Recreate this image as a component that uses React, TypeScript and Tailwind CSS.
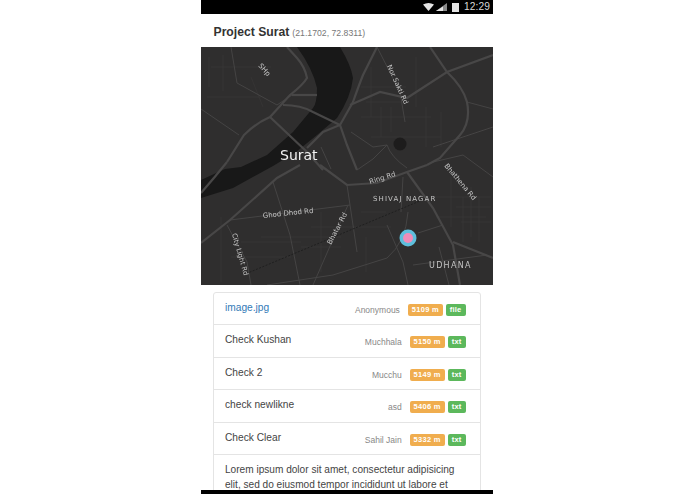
const rows = [
  { name: "image.jpg", author: "Anonymous", dist: "5109 m", kind: "file", link: true },
  { name: "Check Kushan", author: "Muchhala", dist: "5150 m", kind: "txt" },
  { name: "Check 2", author: "Mucchu", dist: "5149 m", kind: "txt" },
  { name: "check newlikne", author: "asd", dist: "5406 m", kind: "txt" },
  { name: "Check Clear", author: "Sahil Jain", dist: "5332 m", kind: "txt" },
];

const majorRoads = [
  "M26 115 L43 88 Q55 76 69 70 L89 48 Q102 38 106 31 Q104 20 96 11 L86 0",
  "M0 146 Q14 130 26 115",
  "M69 70 L106 105 L122 123",
  "M82 58 Q100 58 112 65 L139 78 L146 98 L156 123",
  "M91 48 L116 48",
  "M106 101 L122 85 L139 78 L152 55 Q158 38 162 28 L176 0",
  "M229 0 L246 25 Q262 40 266 55 Q270 75 259 88 L239 111 L226 118",
  "M119 118 L146 138 L176 136 L206 125 L226 118",
  "M206 125 L232 161 L252 198 L259 238",
  "M0 196 L29 173 L76 131 L99 118",
  "M149 58 L179 45 L206 51 L246 25 L292 8",
  "M252 195 L292 211",
];

const minorRoads = [
  "M176 0 L199 45 L204 75",
  "M29 173 L149 158 L146 138",
  "M72 135 L89 188 L99 238",
  "M149 158 L156 205",
  "M112 238 L147 158",
  "M66 238 L132 228 L186 211 Q205 195 207 165",
  "M186 178 L202 215 L207 238",
  "M217 186 L242 178",
  "M212 218 L286 208",
  "M26 178 L46 215 L50 238",
  "M186 98 Q190 110 206 121 M186 98 L172 112 L156 123",
  "M232 115 L262 108 L292 130",
  "M0 62 L38 88 M30 0 L36 36 L76 58 L91 48",
  "M232 100 L292 80 M266 55 L292 62",
  "M202 130 L200 165 M238 200 L248 238",
  "M150 85 L172 100 L186 98 M120 100 L130 122",
];

const streets =
  "M10 20 H70 M6 50 H60 M160 70 H230 M170 90 H240 M60 190 H140 M110 180 H190 M230 150 H290 M235 170 H285 " +
  "M170 20 V70 M215 10 V60 M20 170 V235 M120 165 V225 M250 130 V180 M270 140 V190 " +
  "M8 10 V40 M22 8 V44 M50 30 L62 60 M160 40 H205 M165 55 H200 M180 60 V90 M190 60 V85 M225 60 V100 M240 65 V100 " +
  "M40 195 H100 M30 210 H90 M100 200 H140 M160 165 H185 M165 190 V225 M255 160 H290 M260 175 H290 M262 150 V195 M278 150 V195";

const Map = () => (
  <svg viewBox="0 0 292 238" className="block w-full h-[238px] bg-[#2f2e2e] blur-[0.3px]">
    <path
      d="M96 0 Q112 22 116 41 Q116 56 112 61 L92 85 L66 108 L40 120 L24 122 L0 133 L0 151 L32 141 L72 119 L95 105 L116 88 L136 71 Q150 50 152 31 Q150 18 139 0 Z"
      fill="#181818"
    />
    <path d={streets} fill="none" stroke="#3a3939" strokeWidth="0.6" />
    <g fill="none" stroke="#454444" strokeWidth="1">
      {minorRoads.map((d) => (
        <path key={d} d={d} />
      ))}
    </g>
    <g fill="none" stroke="#484747" strokeWidth="2.2">
      {majorRoads.map((d) => (
        <path key={d} d={d} />
      ))}
    </g>
    <path d="M42 228 L226 151" fill="none" stroke="#1f1f1f" strokeWidth="1" strokeDasharray="2 1.5" />
    <circle cx="199" cy="97" r="6.5" fill="#1d1c1c" />
    <circle cx="207" cy="191" r="8.5" fill="#5ebfdd" />
    <circle cx="207" cy="191" r="5" fill="#f08cb8" />
    <g fill="#c4c4c4" fontSize="7" fontFamily="'DejaVu Sans', sans-serif">
      <text x="79" y="113" fill="#f2f2f2" fontSize="14">Surat</text>
      <text transform="translate(57 19) rotate(48)">SHp</text>
      <text transform="translate(186 19) rotate(66)" fontSize="6.8">Nor Sakti Rd</text>
      <text transform="translate(169 137) rotate(-17)">Ring Rd</text>
      <text transform="translate(243 119) rotate(50)">Bhathena Rd</text>
      <text x="172" y="154" letterSpacing="1.1">SHIVAJ NAGAR</text>
      <text transform="translate(62 171) rotate(-6)">Ghod Dhod Rd</text>
      <text transform="translate(130 198) rotate(-62)">Bhatar Rd</text>
      <text transform="translate(31 187) rotate(74)" fontSize="6.8">City Light Rd</text>
      <text x="228" y="221" letterSpacing="1.3" fontSize="8">UDHANA</text>
    </g>
  </svg>
);

const App = () => {
  return (
    <div className="relative w-[695px] h-[494px] overflow-hidden bg-white font-['Liberation_Sans',Arial,sans-serif]">
      <div className="ml-[201px] w-[292px]">
        <div className="h-[14px] bg-black flex items-center justify-end pr-[3px] text-[#d8d8d8]">
          <svg width="11" height="8" viewBox="0 0 11 8">
            <path d="M0 1.5 Q5.5 -1.5 11 1.5 L5.5 8 Z" fill="#e4e4e4" />
          </svg>
          <svg width="11" height="8" viewBox="0 0 11 8" className="ml-[2px]">
            <path d="M11 0 V8 H0 Z" fill="#8a8a8a" />
            <path d="M7 3.6 V8 H0 Z" fill="#e4e4e4" />
          </svg>
          <div className="w-[7px] h-[9px] bg-[#e4e4e4] ml-[5px] mr-[5px]" />
          <span className="text-[10.2px] leading-none tracking-[0.1px]">12:29</span>
        </div>

        <div className="h-[33px] pl-[12.5px] pt-[9px] leading-[15px] whitespace-nowrap text-[#333]">
          <span className="text-[12.2px] font-bold">Project Surat</span>
          <span className="ml-[3px] text-[8.7px] text-[#777]">(21.1702, 72.8311)</span>
        </div>

        <Map />

        <div className="mx-[12px] mt-[7px] border border-[#e4e4e4] rounded-[3px]">
          {rows.map((row) => (
            <div key={row.name} className="h-[32.4px] border-b border-[#e4e4e4] flex justify-between pl-[11px] pr-[14.5px]">
              <span className={`pt-[8px] text-[10.2px] leading-[13px] ${row.link ? "text-[#337ab7]" : "text-[#444]"}`}>
                {row.name}
              </span>
              <div className="flex items-start pt-[11px] text-[8.5px] leading-[12px]">
                <span className="text-[#888] mr-[8px]">{row.author}</span>
                <span className="w-[35px] h-[12px] rounded-[2px] bg-[#f0ad4e] text-white font-bold text-[7.5px] text-center tracking-[0.3px]">
                  {row.dist}
                </span>
                <span className="ml-[3px] px-[4px] h-[12px] rounded-[2px] bg-[#5cb85c] text-white font-bold text-[7.5px] tracking-[0.2px]">
                  {row.kind}
                </span>
              </div>
            </div>
          ))}
          <p className="px-[11px] pt-[8px] text-[10.1px] leading-[14.6px] text-[#444]">
            Lorem ipsum dolor sit amet, consectetur adipisicing elit, sed do eiusmod tempor incididunt ut labore et
          </p>
        </div>
      </div>
      <div className="absolute left-[201px] top-[490px] w-[292px] h-[4px] bg-black" />
    </div>
  );
};

export default App;
